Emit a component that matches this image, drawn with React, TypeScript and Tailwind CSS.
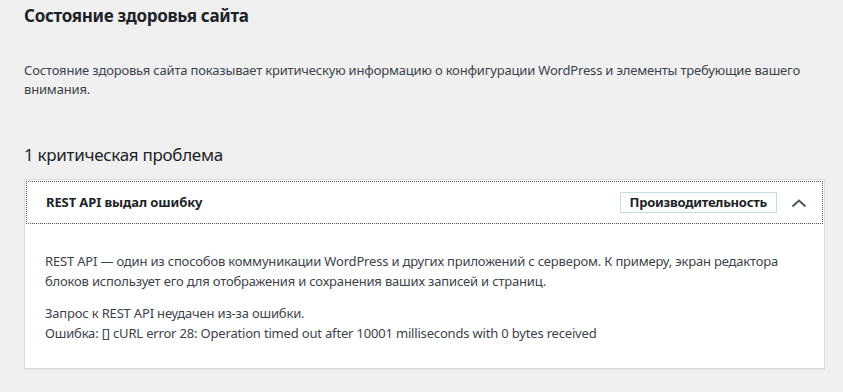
import React from "react";

export default function App() {
  return (
    <div
      className="min-h-[392px] w-[843px] bg-[#f0f0f1] pl-[24px] pr-[18px] text-[#1d2327]"
      style={{ fontFamily: '"Noto Sans", "Open Sans", sans-serif' }}
    >
      <h1 className="pt-[3px] text-[17px] font-bold leading-[26px] tracking-[-0.3px]">Состояние здоровья сайта</h1>
      <p className="mt-[32px] text-[13px] leading-[19px] tracking-[-0.18px] text-[#3c434a]">
        Состояние здоровья сайта показывает критическую информацию о конфигурации WordPress и элементы требующие вашего
        внимания.
      </p>
      <h2 className="mt-[44px] text-[17px] font-normal leading-[24px] tracking-[-0.3px]">1 критическая проблема</h2>
      <div className="mt-[12px] border border-[#dcdcde] bg-white shadow-[0_1px_1px_rgba(0,0,0,0.04)]">
        <div className="m-[1px] flex h-[43px] items-center border border-dotted border-[#50575e] pl-[19px] pr-[15px]">
          <span className="flex-1 text-[13px] font-bold tracking-[-0.1px]">REST API выдал ошибку</span>
          <span className="flex h-[21px] items-center border border-[#c5dfea] px-[9px] text-[13px] font-bold tracking-[-0.25px]">
            Производительность
          </span>
          <svg width="16" height="10" viewBox="0 0 16 10" className="ml-[14px]" fill="none">
            <path d="M1.5 8.5 L8 2.5 L14.5 8.5" stroke="#50575e" strokeWidth="2" />
          </svg>
        </div>
        <div className="px-[20px] pt-[26px] pb-[25px] text-[13px] leading-[20px] tracking-[-0.18px] text-[#3c434a]">
          <p>
            REST API — один из способов коммуникации WordPress и других приложений с сервером. К примеру, экран редактора
            блоков использует его для отображения и сохранения ваших записей и страниц.
          </p>
          <p className="mt-[12px]">
            Запрос к REST API неудачен из-за ошибки.
            <br />
            Ошибка: [] cURL error 28: Operation timed out after 10001 milliseconds with 0 bytes received
          </p>
        </div>
      </div>
    </div>
  );
}
